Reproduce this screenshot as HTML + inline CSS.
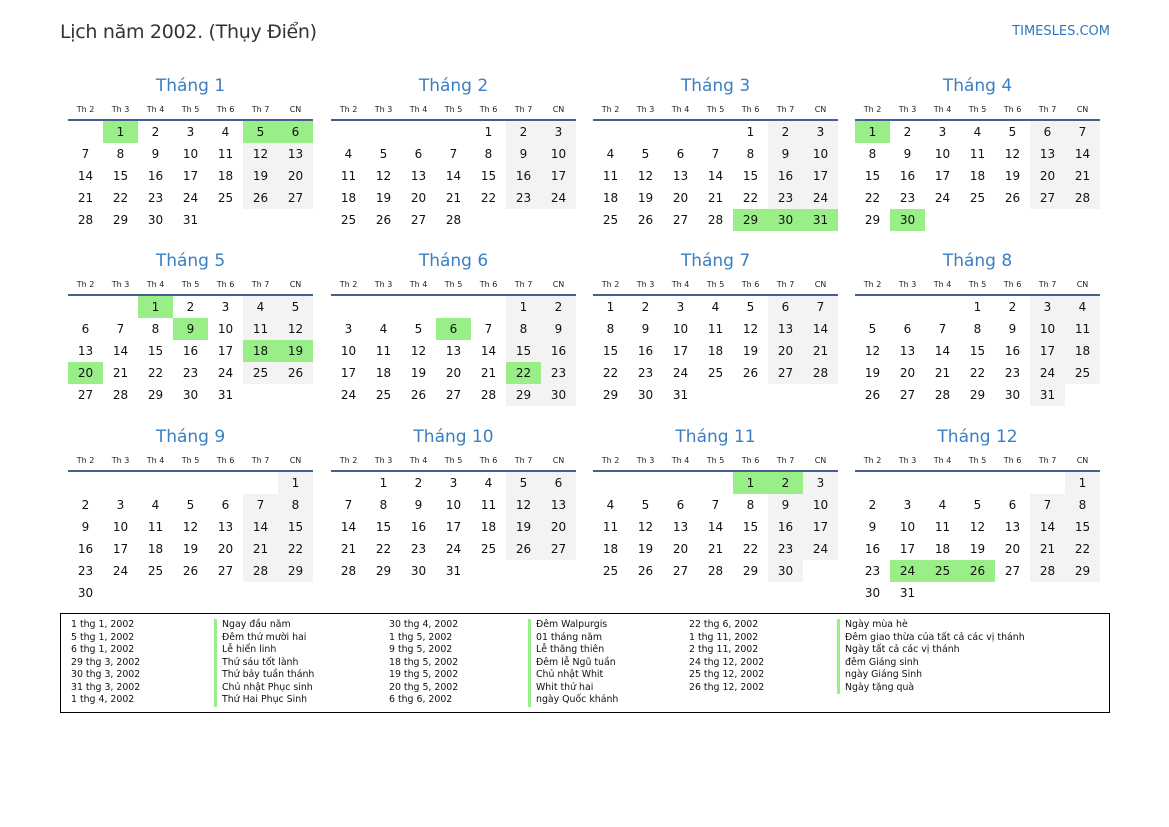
<!DOCTYPE html>
<html><head><meta charset="utf-8"><style>
body{margin:0;width:1169px;height:827px;background:#fff;font-family:"DejaVu Sans","Liberation Sans",sans-serif;position:relative;overflow:hidden;color:#111}
.t{position:absolute;left:60px;top:21px;font-size:19px;color:#333;letter-spacing:-0.3px}
.s{position:absolute;right:59px;top:24px;font-size:13px;color:#2f78c0}
.m{position:absolute;width:245px}
.m h2{margin:0;height:22px;line-height:22px;text-align:center;font-weight:normal;font-size:17px;color:#3a7fc1;position:relative;top:-10px}
.hd{display:grid;grid-template-columns:repeat(7,35px);font-size:8px;text-align:center;height:12px;line-height:12px;position:absolute;top:19px;width:245px;color:#222}
.ln{position:absolute;top:34px;left:0;width:245px;height:2px;background:#45608f}
.g{position:absolute;top:36px;left:0;display:grid;grid-template-columns:repeat(7,35px);grid-auto-rows:22px;font-size:12px;text-align:center;line-height:22px}
.g b{font-weight:normal}
.g b.w{background:#f3f3f3}
.g b.h{background:#99ee88}
.lg{position:absolute;left:60px;top:613px;width:1048px;height:98px;border:1px solid #000;font-size:9.4px;line-height:12.5px}
.c{position:absolute;top:5px;white-space:nowrap}
.n{position:absolute;top:5px;white-space:nowrap;border-left:3px solid #99ee88;padding-left:5px}
</style></head><body>
<div class="t">Lịch năm 2002. (Thụy Điển)</div>
<div class="s">TIMESLES.COM</div>

<div class="m" style="left:68px;top:85px"><h2>Tháng 1</h2><div class="hd"><span>Th 2</span><span>Th 3</span><span>Th 4</span><span>Th 5</span><span>Th 6</span><span>Th 7</span><span>CN</span></div><div class="ln"></div><div class="g">
<b class="h" style="grid-column-start:2">1</b><b>2</b><b>3</b><b>4</b><b class="h">5</b><b class="h">6</b>
<b>7</b><b>8</b><b>9</b><b>10</b><b>11</b><b class="w">12</b><b class="w">13</b>
<b>14</b><b>15</b><b>16</b><b>17</b><b>18</b><b class="w">19</b><b class="w">20</b>
<b>21</b><b>22</b><b>23</b><b>24</b><b>25</b><b class="w">26</b><b class="w">27</b>
<b>28</b><b>29</b><b>30</b><b>31</b></div></div>

<div class="m" style="left:331px;top:85px"><h2>Tháng 2</h2><div class="hd"><span>Th 2</span><span>Th 3</span><span>Th 4</span><span>Th 5</span><span>Th 6</span><span>Th 7</span><span>CN</span></div><div class="ln"></div><div class="g">
<b style="grid-column-start:5">1</b><b class="w">2</b><b class="w">3</b>
<b>4</b><b>5</b><b>6</b><b>7</b><b>8</b><b class="w">9</b><b class="w">10</b>
<b>11</b><b>12</b><b>13</b><b>14</b><b>15</b><b class="w">16</b><b class="w">17</b>
<b>18</b><b>19</b><b>20</b><b>21</b><b>22</b><b class="w">23</b><b class="w">24</b>
<b>25</b><b>26</b><b>27</b><b>28</b></div></div>

<div class="m" style="left:593px;top:85px"><h2>Tháng 3</h2><div class="hd"><span>Th 2</span><span>Th 3</span><span>Th 4</span><span>Th 5</span><span>Th 6</span><span>Th 7</span><span>CN</span></div><div class="ln"></div><div class="g">
<b style="grid-column-start:5">1</b><b class="w">2</b><b class="w">3</b>
<b>4</b><b>5</b><b>6</b><b>7</b><b>8</b><b class="w">9</b><b class="w">10</b>
<b>11</b><b>12</b><b>13</b><b>14</b><b>15</b><b class="w">16</b><b class="w">17</b>
<b>18</b><b>19</b><b>20</b><b>21</b><b>22</b><b class="w">23</b><b class="w">24</b>
<b>25</b><b>26</b><b>27</b><b>28</b><b class="h">29</b><b class="h">30</b><b class="h">31</b></div></div>

<div class="m" style="left:855px;top:85px"><h2>Tháng 4</h2><div class="hd"><span>Th 2</span><span>Th 3</span><span>Th 4</span><span>Th 5</span><span>Th 6</span><span>Th 7</span><span>CN</span></div><div class="ln"></div><div class="g">
<b class="h">1</b><b>2</b><b>3</b><b>4</b><b>5</b><b class="w">6</b><b class="w">7</b>
<b>8</b><b>9</b><b>10</b><b>11</b><b>12</b><b class="w">13</b><b class="w">14</b>
<b>15</b><b>16</b><b>17</b><b>18</b><b>19</b><b class="w">20</b><b class="w">21</b>
<b>22</b><b>23</b><b>24</b><b>25</b><b>26</b><b class="w">27</b><b class="w">28</b>
<b>29</b><b class="h">30</b></div></div>

<div class="m" style="left:68px;top:260px"><h2>Tháng 5</h2><div class="hd"><span>Th 2</span><span>Th 3</span><span>Th 4</span><span>Th 5</span><span>Th 6</span><span>Th 7</span><span>CN</span></div><div class="ln"></div><div class="g">
<b class="h" style="grid-column-start:3">1</b><b>2</b><b>3</b><b class="w">4</b><b class="w">5</b>
<b>6</b><b>7</b><b>8</b><b class="h">9</b><b>10</b><b class="w">11</b><b class="w">12</b>
<b>13</b><b>14</b><b>15</b><b>16</b><b>17</b><b class="h">18</b><b class="h">19</b>
<b class="h">20</b><b>21</b><b>22</b><b>23</b><b>24</b><b class="w">25</b><b class="w">26</b>
<b>27</b><b>28</b><b>29</b><b>30</b><b>31</b></div></div>

<div class="m" style="left:331px;top:260px"><h2>Tháng 6</h2><div class="hd"><span>Th 2</span><span>Th 3</span><span>Th 4</span><span>Th 5</span><span>Th 6</span><span>Th 7</span><span>CN</span></div><div class="ln"></div><div class="g">
<b class="w" style="grid-column-start:6">1</b><b class="w">2</b>
<b>3</b><b>4</b><b>5</b><b class="h">6</b><b>7</b><b class="w">8</b><b class="w">9</b>
<b>10</b><b>11</b><b>12</b><b>13</b><b>14</b><b class="w">15</b><b class="w">16</b>
<b>17</b><b>18</b><b>19</b><b>20</b><b>21</b><b class="h">22</b><b class="w">23</b>
<b>24</b><b>25</b><b>26</b><b>27</b><b>28</b><b class="w">29</b><b class="w">30</b></div></div>

<div class="m" style="left:593px;top:260px"><h2>Tháng 7</h2><div class="hd"><span>Th 2</span><span>Th 3</span><span>Th 4</span><span>Th 5</span><span>Th 6</span><span>Th 7</span><span>CN</span></div><div class="ln"></div><div class="g">
<b>1</b><b>2</b><b>3</b><b>4</b><b>5</b><b class="w">6</b><b class="w">7</b>
<b>8</b><b>9</b><b>10</b><b>11</b><b>12</b><b class="w">13</b><b class="w">14</b>
<b>15</b><b>16</b><b>17</b><b>18</b><b>19</b><b class="w">20</b><b class="w">21</b>
<b>22</b><b>23</b><b>24</b><b>25</b><b>26</b><b class="w">27</b><b class="w">28</b>
<b>29</b><b>30</b><b>31</b></div></div>

<div class="m" style="left:855px;top:260px"><h2>Tháng 8</h2><div class="hd"><span>Th 2</span><span>Th 3</span><span>Th 4</span><span>Th 5</span><span>Th 6</span><span>Th 7</span><span>CN</span></div><div class="ln"></div><div class="g">
<b style="grid-column-start:4">1</b><b>2</b><b class="w">3</b><b class="w">4</b>
<b>5</b><b>6</b><b>7</b><b>8</b><b>9</b><b class="w">10</b><b class="w">11</b>
<b>12</b><b>13</b><b>14</b><b>15</b><b>16</b><b class="w">17</b><b class="w">18</b>
<b>19</b><b>20</b><b>21</b><b>22</b><b>23</b><b class="w">24</b><b class="w">25</b>
<b>26</b><b>27</b><b>28</b><b>29</b><b>30</b><b class="w">31</b></div></div>

<div class="m" style="left:68px;top:436px"><h2>Tháng 9</h2><div class="hd"><span>Th 2</span><span>Th 3</span><span>Th 4</span><span>Th 5</span><span>Th 6</span><span>Th 7</span><span>CN</span></div><div class="ln"></div><div class="g">
<b class="w" style="grid-column-start:7">1</b>
<b>2</b><b>3</b><b>4</b><b>5</b><b>6</b><b class="w">7</b><b class="w">8</b>
<b>9</b><b>10</b><b>11</b><b>12</b><b>13</b><b class="w">14</b><b class="w">15</b>
<b>16</b><b>17</b><b>18</b><b>19</b><b>20</b><b class="w">21</b><b class="w">22</b>
<b>23</b><b>24</b><b>25</b><b>26</b><b>27</b><b class="w">28</b><b class="w">29</b>
<b>30</b></div></div>

<div class="m" style="left:331px;top:436px"><h2>Tháng 10</h2><div class="hd"><span>Th 2</span><span>Th 3</span><span>Th 4</span><span>Th 5</span><span>Th 6</span><span>Th 7</span><span>CN</span></div><div class="ln"></div><div class="g">
<b style="grid-column-start:2">1</b><b>2</b><b>3</b><b>4</b><b class="w">5</b><b class="w">6</b>
<b>7</b><b>8</b><b>9</b><b>10</b><b>11</b><b class="w">12</b><b class="w">13</b>
<b>14</b><b>15</b><b>16</b><b>17</b><b>18</b><b class="w">19</b><b class="w">20</b>
<b>21</b><b>22</b><b>23</b><b>24</b><b>25</b><b class="w">26</b><b class="w">27</b>
<b>28</b><b>29</b><b>30</b><b>31</b></div></div>

<div class="m" style="left:593px;top:436px"><h2>Tháng 11</h2><div class="hd"><span>Th 2</span><span>Th 3</span><span>Th 4</span><span>Th 5</span><span>Th 6</span><span>Th 7</span><span>CN</span></div><div class="ln"></div><div class="g">
<b class="h" style="grid-column-start:5">1</b><b class="h">2</b><b class="w">3</b>
<b>4</b><b>5</b><b>6</b><b>7</b><b>8</b><b class="w">9</b><b class="w">10</b>
<b>11</b><b>12</b><b>13</b><b>14</b><b>15</b><b class="w">16</b><b class="w">17</b>
<b>18</b><b>19</b><b>20</b><b>21</b><b>22</b><b class="w">23</b><b class="w">24</b>
<b>25</b><b>26</b><b>27</b><b>28</b><b>29</b><b class="w">30</b></div></div>

<div class="m" style="left:855px;top:436px"><h2>Tháng 12</h2><div class="hd"><span>Th 2</span><span>Th 3</span><span>Th 4</span><span>Th 5</span><span>Th 6</span><span>Th 7</span><span>CN</span></div><div class="ln"></div><div class="g">
<b class="w" style="grid-column-start:7">1</b>
<b>2</b><b>3</b><b>4</b><b>5</b><b>6</b><b class="w">7</b><b class="w">8</b>
<b>9</b><b>10</b><b>11</b><b>12</b><b>13</b><b class="w">14</b><b class="w">15</b>
<b>16</b><b>17</b><b>18</b><b>19</b><b>20</b><b class="w">21</b><b class="w">22</b>
<b>23</b><b class="h">24</b><b class="h">25</b><b class="h">26</b><b>27</b><b class="w">28</b><b class="w">29</b>
<b>30</b><b>31</b></div></div>

<div class="lg">
<div class="c" style="left:10px">1 thg 1, 2002<br>5 thg 1, 2002<br>6 thg 1, 2002<br>29 thg 3, 2002<br>30 thg 3, 2002<br>31 thg 3, 2002<br>1 thg 4, 2002</div>
<div class="n" style="left:153px">Ngay đầu năm<br>Đêm thứ mười hai<br>Lễ hiển linh<br>Thứ sáu tốt lành<br>Thứ bảy tuần thánh<br>Chủ nhật Phục sinh<br>Thứ Hai Phục Sinh</div>
<div class="c" style="left:328px">30 thg 4, 2002<br>1 thg 5, 2002<br>9 thg 5, 2002<br>18 thg 5, 2002<br>19 thg 5, 2002<br>20 thg 5, 2002<br>6 thg 6, 2002</div>
<div class="n" style="left:467px">Đêm Walpurgis<br>01 tháng năm<br>Lễ thăng thiên<br>Đêm lễ Ngũ tuần<br>Chủ nhật Whit<br>Whit thứ hai<br>ngày Quốc khánh</div>
<div class="c" style="left:628px">22 thg 6, 2002<br>1 thg 11, 2002<br>2 thg 11, 2002<br>24 thg 12, 2002<br>25 thg 12, 2002<br>26 thg 12, 2002</div>
<div class="n" style="left:776px">Ngày mùa hè<br>Đêm giao thừa của tất cả các vị thánh<br>Ngày tất cả các vị thánh<br>đêm Giáng sinh<br>ngày Giáng Sinh<br>Ngày tặng quà</div>
</div>
</body></html>
